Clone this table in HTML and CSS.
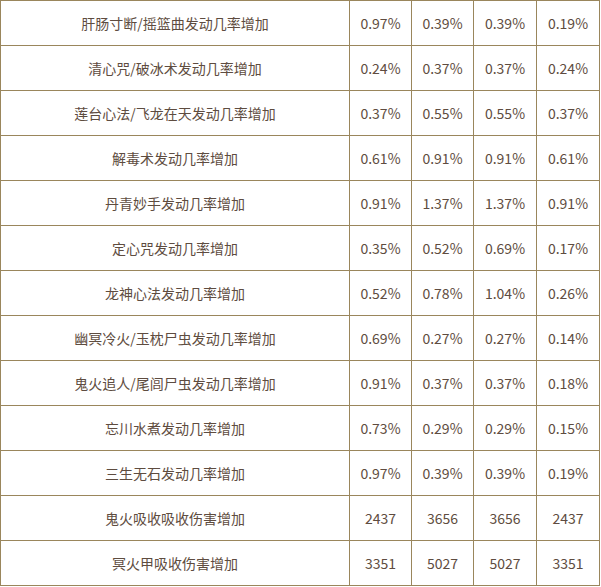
FILE: index.html
```html
<!DOCTYPE html>
<html>
<head>
<meta charset="utf-8">
<link rel="stylesheet" href="styles.css">
</head>
<body>
<table class="tbl">
<colgroup>
<col class="c-name"><col class="c-v"><col class="c-v"><col class="c-v2"><col class="c-v2">
</colgroup>
<tbody>
<tr><td>肝肠寸断/摇篮曲发动几率增加</td><td>0.97%</td><td>0.39%</td><td>0.39%</td><td>0.19%</td></tr>
<tr><td>清心咒/破冰术发动几率增加</td><td>0.24%</td><td>0.37%</td><td>0.37%</td><td>0.24%</td></tr>
<tr><td>莲台心法/飞龙在天发动几率增加</td><td>0.37%</td><td>0.55%</td><td>0.55%</td><td>0.37%</td></tr>
<tr><td>解毒术发动几率增加</td><td>0.61%</td><td>0.91%</td><td>0.91%</td><td>0.61%</td></tr>
<tr><td>丹青妙手发动几率增加</td><td>0.91%</td><td>1.37%</td><td>1.37%</td><td>0.91%</td></tr>
<tr><td>定心咒发动几率增加</td><td>0.35%</td><td>0.52%</td><td>0.69%</td><td>0.17%</td></tr>
<tr><td>龙神心法发动几率增加</td><td>0.52%</td><td>0.78%</td><td>1.04%</td><td>0.26%</td></tr>
<tr><td>幽冥冷火/玉枕尸虫发动几率增加</td><td>0.69%</td><td>0.27%</td><td>0.27%</td><td>0.14%</td></tr>
<tr><td>鬼火追人/尾闾尸虫发动几率增加</td><td>0.91%</td><td>0.37%</td><td>0.37%</td><td>0.18%</td></tr>
<tr><td>忘川水煮发动几率增加</td><td>0.73%</td><td>0.29%</td><td>0.29%</td><td>0.15%</td></tr>
<tr><td>三生无石发动几率增加</td><td>0.97%</td><td>0.39%</td><td>0.39%</td><td>0.19%</td></tr>
<tr><td>鬼火吸收吸收伤害增加</td><td>2437</td><td>3656</td><td>3656</td><td>2437</td></tr>
<tr><td>冥火甲吸收伤害增加</td><td>3351</td><td>5027</td><td>5027</td><td>3351</td></tr>
</tbody>
</table>
</body>
</html>
```

FILE: styles.css
```css
html, body {
  margin: 0;
  padding: 0;
  background: #ffffff;
}
.tbl {
  border-collapse: collapse;
  table-layout: fixed;
  width: 600px;
  font-family: "Noto Sans CJK SC", "Noto Sans", sans-serif;
  font-size: 14px;
  color: #5e4c40;
}
.c-name { width: 349px; }
.c-v { width: 62px; }
.c-v2 { width: 63px; }
.tbl td {
  border: 1px solid #9a865c;
  height: 44px;
  padding: 0;
  text-align: center;
  vertical-align: middle;
  line-height: 20px;
}
```
